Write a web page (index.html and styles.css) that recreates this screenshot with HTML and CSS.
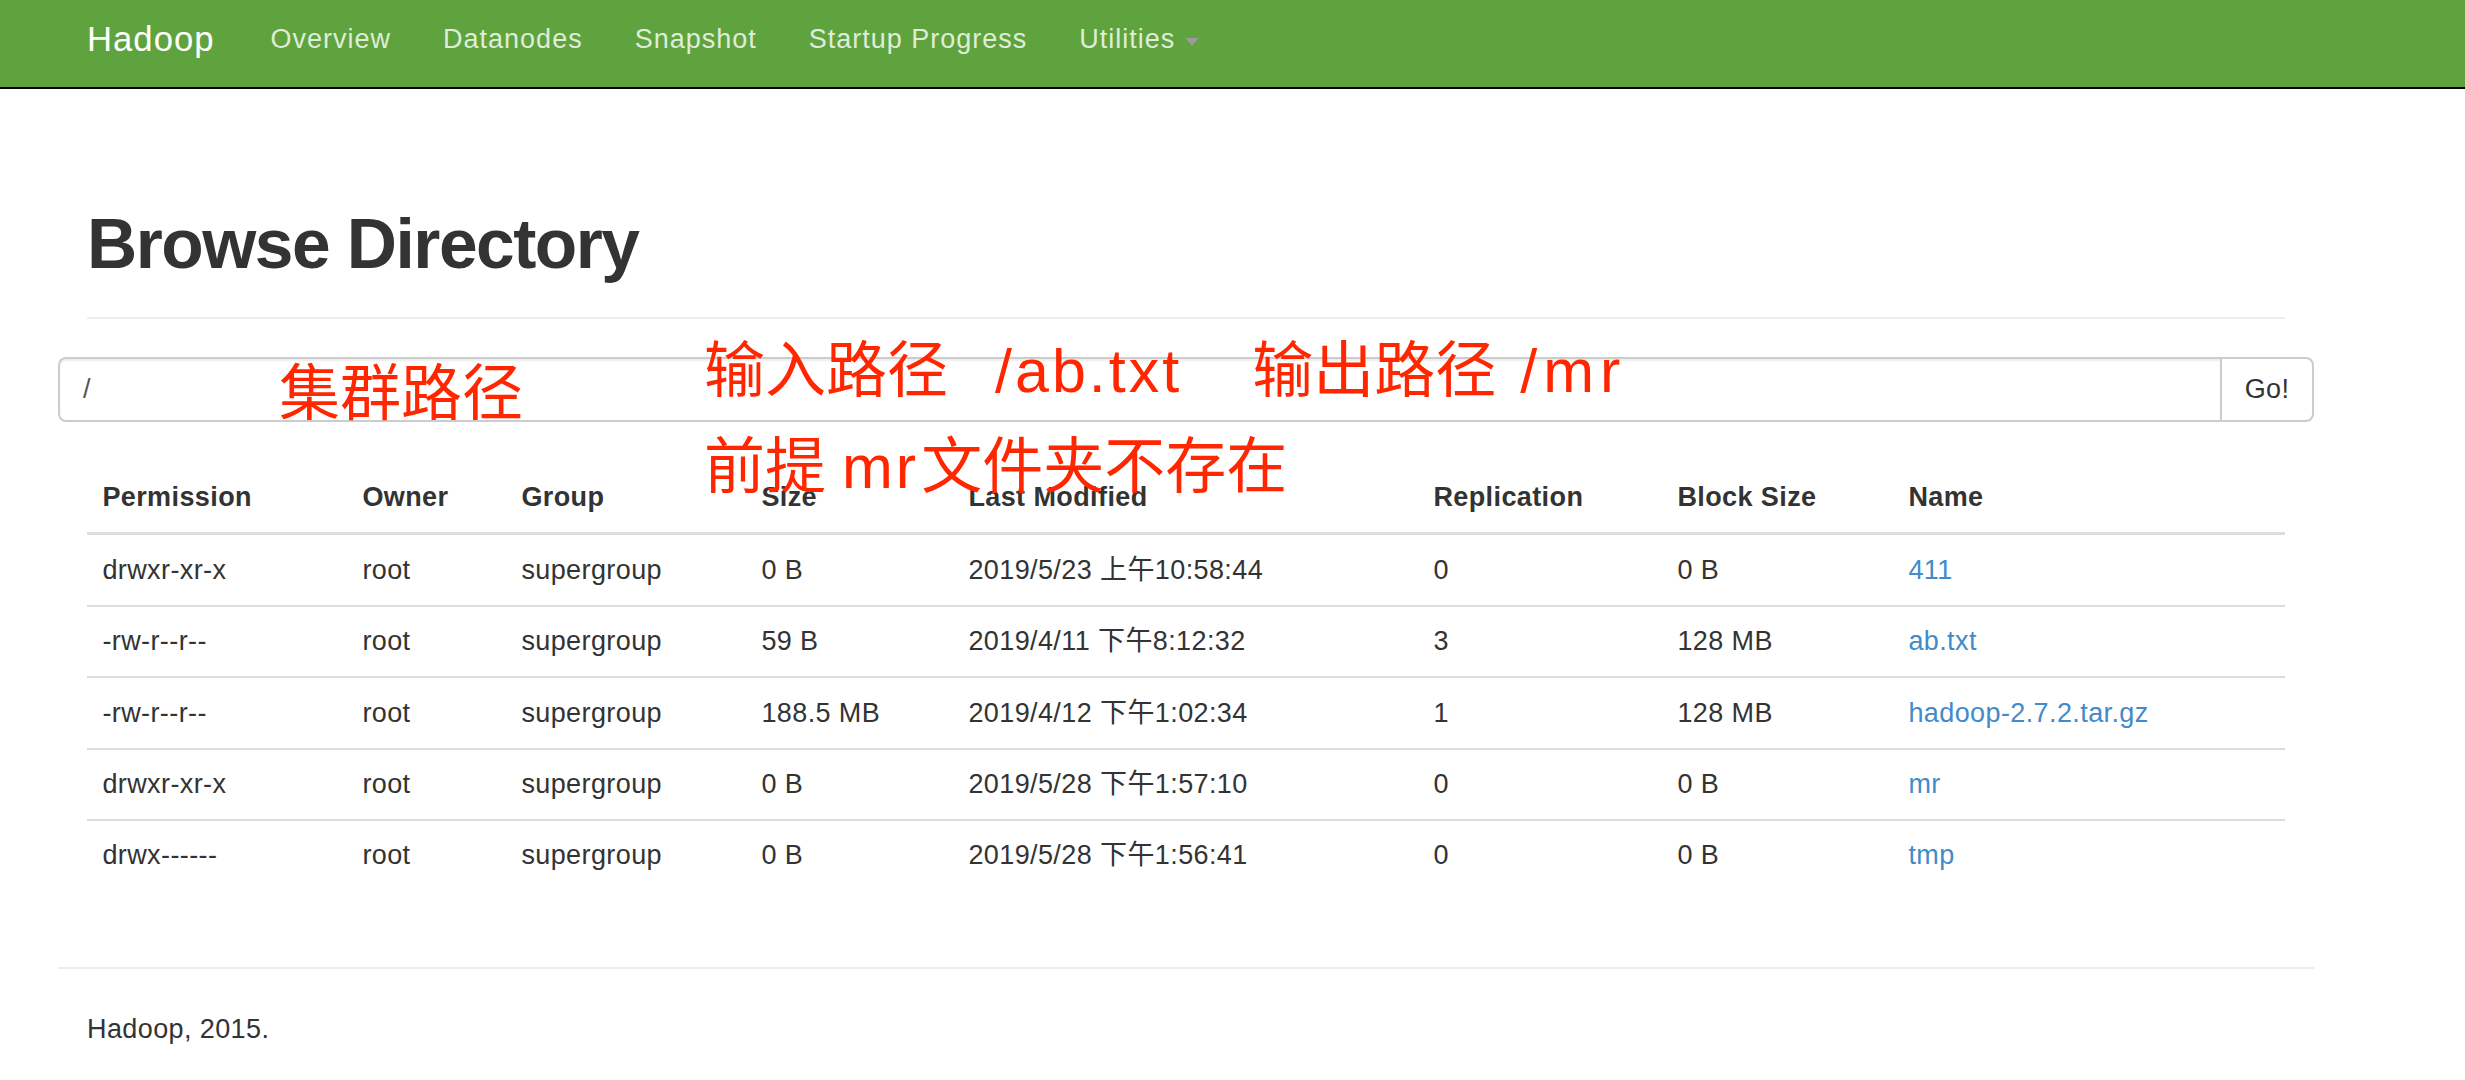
FILE: index.html
```html
<!DOCTYPE html>
<html lang="zh-CN">
<head>
<meta charset="utf-8">
<title>Browsing HDFS</title>
<link rel="stylesheet" href="styles.css">
</head>
<body>
<header class="navbar">
  <div class="container nav-inner">
    <a class="brand" href="#">Hadoop</a>
    <ul class="nav">
      <li><a href="#">Overview</a></li>
      <li><a href="#">Datanodes</a></li>
      <li><a href="#">Snapshot</a></li>
      <li><a href="#">Startup Progress</a></li>
      <li><a href="#">Utilities<span class="caret"></span></a></li>
    </ul>
  </div>
</header>

<main class="container">
  <div class="page-header"><h1>Browse Directory</h1></div>

  <form class="input-group">
    <input class="path-input" type="text" value="/">
    <button class="go-btn" type="button">Go!</button>
  </form>

  <table class="listing">
    <colgroup>
      <col class="c-perm"><col class="c-owner"><col class="c-group"><col class="c-size">
      <col class="c-mod"><col class="c-rep"><col class="c-block"><col class="c-name">
    </colgroup>
    <thead>
      <tr><th>Permission</th><th>Owner</th><th>Group</th><th>Size</th><th>Last Modified</th><th>Replication</th><th>Block Size</th><th>Name</th></tr>
    </thead>
    <tbody>
      <tr><td>drwxr-xr-x</td><td>root</td><td>supergroup</td><td>0 B</td><td>2019/5/23 上午10:58:44</td><td>0</td><td>0 B</td><td><a href="#">411</a></td></tr>
      <tr><td>-rw-r--r--</td><td>root</td><td>supergroup</td><td>59 B</td><td>2019/4/11 下午8:12:32</td><td>3</td><td>128 MB</td><td><a href="#">ab.txt</a></td></tr>
      <tr><td>-rw-r--r--</td><td>root</td><td>supergroup</td><td>188.5 MB</td><td>2019/4/12 下午1:02:34</td><td>1</td><td>128 MB</td><td><a href="#">hadoop-2.7.2.tar.gz</a></td></tr>
      <tr><td>drwxr-xr-x</td><td>root</td><td>supergroup</td><td>0 B</td><td>2019/5/28 下午1:57:10</td><td>0</td><td>0 B</td><td><a href="#">mr</a></td></tr>
      <tr><td>drwx------</td><td>root</td><td>supergroup</td><td>0 B</td><td>2019/5/28 下午1:56:41</td><td>0</td><td>0 B</td><td><a href="#">tmp</a></td></tr>
    </tbody>
  </table>
</main>

<footer class="container footer">
  <hr class="footer-rule">
  <p>Hadoop, 2015.</p>
</footer>

<div class="note note-cluster">集群路径</div>
<div class="note note-paths"><span>输入路径</span><span class="latin gap-a">/ab.txt</span><span class="gap-b">输出路径</span><span class="latin wide gap-c">/mr</span></div>
<div class="note note-premise"><span>前提</span><span class="latin gap-d">mr</span><span class="gap-e">文件夹不存在</span></div>
</body>
</html>
```

FILE: styles.css
```css
* {
  box-sizing: border-box;
}

body {
  margin: 0;
  font-family: "Liberation Sans", Arial, "Noto Sans CJK SC", sans-serif;
  font-size: 27px;
  letter-spacing: 0.4px;
  color: #333;
  background: #fff;
}

a {
  text-decoration: none;
}

.container {
  width: 2256px;
  margin-left: 58px;
  padding: 0 29px;
}

/* ---------- navbar ---------- */
.navbar {
  height: 89px;
  background: #5fa33e;
  border-bottom: 2px solid #000;
}

.nav-inner {
  display: flex;
  align-items: flex-start;
  height: 87px;
}

.brand {
  display: block;
  padding: 20px 30px 0 0;
  font-size: 34.7px;
  line-height: 39px;
  letter-spacing: 1px;
  color: #fff;
}

.nav {
  display: flex;
  margin: 0;
  padding: 0;
  list-style: none;
}

.nav a {
  display: flex;
  align-items: center;
  padding: 20px 26px 0;
  line-height: 39px;
  letter-spacing: 1px;
  color: #dfedd8;
}

.caret {
  display: inline-block;
  width: 0;
  height: 0;
  margin-left: 10px;
  margin-top: 4px;
  border-top: 8px solid #9a9a9a;
  border-left: 7px solid transparent;
  border-right: 7px solid transparent;
}

/* ---------- header ---------- */
.page-header {
  margin-top: 117px;
  margin-bottom: 38px;
  padding-bottom: 16px;
  border-bottom: 2px solid #eee;
}

h1 {
  margin: 0 0 19px;
  font-size: 69.5px;
  line-height: 76px;
  font-weight: 700;
  letter-spacing: -1.5px;
  color: #333;
}

/* ---------- path form ---------- */
.input-group {
  display: flex;
  height: 65px;
  margin: 0 -29px;
}

.path-input {
  flex: 1;
  height: 65px;
  padding: 0 23px;
  border: 2px solid #ccc;
  border-right: 0;
  border-radius: 8px 0 0 8px;
  box-shadow: inset 0 2px 2px rgba(0, 0, 0, 0.075);
  font: inherit;
  letter-spacing: 0.4px;
  color: #555;
  background: #fff;
  outline: none;
}

.go-btn {
  width: 94px;
  height: 65px;
  padding: 0;
  border: 2px solid #ccc;
  border-radius: 0 8px 8px 0;
  background: #fff;
  font: inherit;
  letter-spacing: 0.4px;
  color: #333;
}

/* ---------- listing ---------- */
.listing {
  width: 2198px;
  margin-top: 41px;
  border-collapse: separate;
  border-spacing: 0;
  table-layout: fixed;
}

.c-perm { width: 260px; }
.c-owner { width: 159px; }
.c-group { width: 240px; }
.c-size { width: 207px; }
.c-mod { width: 465px; }
.c-rep { width: 244px; }
.c-block { width: 231px; }
.c-name { width: 392px; }

.listing th,
.listing td {
  padding: 15.4px;
  line-height: 38.6px;
  text-align: left;
  vertical-align: top;
  white-space: nowrap;
}

.listing th {
  font-weight: 700;
  border-bottom: 3px solid #ddd;
}

.listing td {
  border-top: 2px solid #ddd;
}

.listing tbody tr:first-child td {
  border-top: 0;
}

.listing a {
  color: #428bca;
}

/* ---------- footer ---------- */
.footer-rule {
  height: 0;
  margin: 77px -29px 41px;
  border: 0;
  border-top: 2px solid #eee;
}

.footer p {
  margin: 0;
  line-height: 38.6px;
}

/* ---------- red annotations ---------- */
.note {
  position: absolute;
  display: flex;
  align-items: baseline;
  white-space: nowrap;
  font-family: "Noto Sans CJK SC", sans-serif;
  font-size: 61px;
  line-height: 61px;
  letter-spacing: 0;
  color: #ff2600;
}

.note .latin {
  font-family: "Liberation Sans", Arial, sans-serif;
  letter-spacing: 3px;
}

.note .wide {
  letter-spacing: 6px;
}

.note-cluster {
  left: 279px;
  top: 358px;
}

.note-paths {
  left: 704px;
  top: 335px;
}

.note-premise {
  left: 704px;
  top: 431px;
}

.gap-a { margin-left: 47px; }
.gap-b { margin-left: 70px; }
.gap-c { margin-left: 24px; }
.gap-d { margin-left: 16px; }
.gap-e { margin-left: 2px; }
```
